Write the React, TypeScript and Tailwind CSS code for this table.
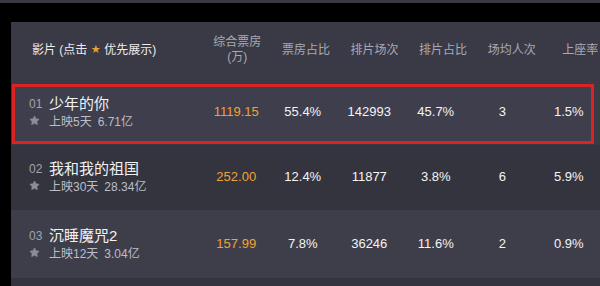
import { Star } from 'lucide-react';

type Film = {
  rank: string;
  name: string;
  days: string;
  total: string;
  box: string;
  boxRate: string;
  shows: string;
  showRate: string;
  avg: string;
  seat: string;
};

const films: Film[] = [
  { rank: '01', name: '少年的你', days: '上映5天', total: '6.71亿', box: '1119.15', boxRate: '55.4%', shows: '142993', showRate: '45.7%', avg: '3', seat: '1.5%' },
  { rank: '02', name: '我和我的祖国', days: '上映30天', total: '28.34亿', box: '252.00', boxRate: '12.4%', shows: '11877', showRate: '3.8%', avg: '6', seat: '5.9%' },
  { rank: '03', name: '沉睡魔咒2', days: '上映12天', total: '3.04亿', box: '157.99', boxRate: '7.8%', shows: '36246', showRate: '11.6%', avg: '2', seat: '0.9%' },
];

const font = { fontFamily: '"Liberation Sans", "Noto Sans CJK SC", sans-serif' };

function FilmRow({ f }: { f: Film }) {
  return (
    <div className="flex items-center h-full">
      <div className="w-[192px] shrink-0 flex pl-[18px]">
        <div className="w-[20px] flex flex-col items-start">
          <span className="text-[12px] leading-[16px] text-[#a3a3ad] mt-[2px]">{f.rank}</span>
          <Star className="w-[11px] h-[11px] mt-[3px] fill-[#8c8c96] text-[#8c8c96]" strokeWidth={1} />
        </div>
        <div className="flex flex-col">
          <span className="text-[15px] leading-[20px] text-[#f2f2f2]">{f.name}</span>
          <span className="text-[12px] leading-[17px] text-[#bdbdc6]">
            {f.days}
            <span className="ml-[6px]">{f.total}</span>
          </span>
        </div>
      </div>
      <div className="grid grid-cols-[repeat(6,66.5px)] text-[13px] text-center text-[#f4f4f4] -mt-[1px]">
        <span className="text-[#efa335]">{f.box}</span>
        <span>{f.boxRate}</span>
        <span>{f.shows}</span>
        <span>{f.showRate}</span>
        <span>{f.avg}</span>
        <span>{f.seat}</span>
      </div>
    </div>
  );
}

export default function App() {
  return (
    <div className="w-[600px] h-[286px] bg-black overflow-hidden" style={font}>
      <div className="h-[3px] bg-[#393944]" />
      <div className="h-[19px]" />
      <div className="flex h-[264px]">
        <div className="w-[11px] shrink-0" />
        <div className="flex-1 flex flex-col bg-[#33333e] overflow-hidden">
          {/* header */}
          <div className="h-[56px] shrink-0 flex items-center bg-[#3a3a46]">
            <div className="w-[192px] shrink-0 pl-[21px] text-[12px] text-[#ececf0] flex items-center">
              影片 (点击
              <span className="mx-[4px] text-[9px] text-[#e9a230]">★</span>
              优先展示)
            </div>
            <div className="grid grid-cols-[repeat(6,68.6px)] text-[12px] text-center text-[#a9a9b3] leading-[15px]">
              <span>综合票房<br />(万)</span>
              <span className="self-center">票房占比</span>
              <span className="self-center">排片场次</span>
              <span className="self-center">排片占比</span>
              <span className="self-center">场均人次</span>
              <span className="self-center">上座率</span>
            </div>
          </div>
          {/* row 1, outlined */}
          <div className="h-[67px] shrink-0 bg-[#3a3a46] pt-[6px] pl-[2px] pr-[6px] pb-[1px]">
            <div className="h-full border-[3px] border-[#dc2222] bg-[#3e3e4c] -ml-[1px] overflow-hidden">
              <div className="h-full -ml-[4px] -mt-[2px]">
                <FilmRow f={films[0]} />
              </div>
            </div>
          </div>
          <div className="h-[65px] shrink-0 bg-[#34343f]">
            <FilmRow f={films[1]} />
          </div>
          <div className="h-[68px] shrink-0 bg-[#3e3e4b]">
            <FilmRow f={films[2]} />
          </div>
          <div className="flex-1 bg-[#34343f]" />
        </div>
      </div>
    </div>
  );
}
